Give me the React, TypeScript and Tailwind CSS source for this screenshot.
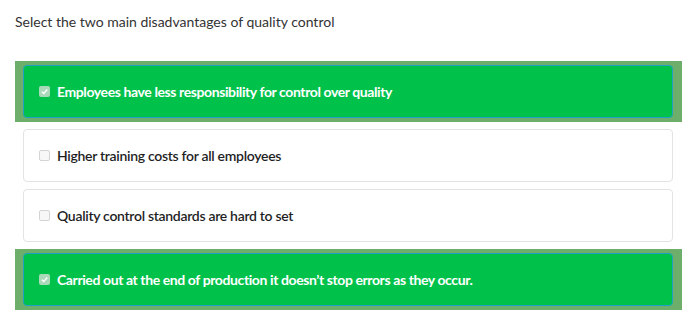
import React from 'react';

type Option = { label: string; selected: boolean };

const options: Option[] = [
  { label: 'Employees have less responsibility for control over quality', selected: true },
  { label: 'Higher training costs for all employees', selected: false },
  { label: 'Quality control standards are hard to set', selected: false },
  { label: 'Carried out at the end of production it doesn\u2019t stop errors as they occur.', selected: true },
];

const CheckBox: React.FC<{ checked: boolean }> = ({ checked }) =>
  checked ? (
    <span className="flex h-[11px] w-[11px] shrink-0 items-center justify-center rounded-[2px] bg-[#a9d9b8]">
      <svg viewBox="0 0 10 10" className="h-[9px] w-[9px]">
        <path d="M2 5.2 L4.2 7.3 L8 2.8" fill="none" stroke="#ffffff" strokeWidth="1.6" />
      </svg>
    </span>
  ) : (
    <span className="h-[11px] w-[11px] shrink-0 rounded-[2px] border border-[#d4d4d4] bg-[#f7f7f7]" />
  );

const OptionRow: React.FC<{ option: Option }> = ({ option }) => {
  if (option.selected) {
    return (
      <div className="bg-[#6daf6a] pl-2 pr-[9px] py-1">
        <div className="flex h-[53px] items-center gap-[7px] rounded-[4px] border border-[#1fa0c4] bg-[#00c24b] pl-[15px]">
          <CheckBox checked />
          <span className="text-[14px] font-bold tracking-[-0.4px] text-white">{option.label}</span>
        </div>
      </div>
    );
  }
  return (
    <div className="ml-2 mr-[9px] flex h-[53px] items-center gap-[7px] rounded-[4px] border border-[#e3e3e3] bg-white pl-[15px]">
      <CheckBox checked={false} />
      <span className="text-[14px] font-semibold tracking-[-0.3px] text-[#1f1f1f]">{option.label}</span>
    </div>
  );
};

export default function App() {
  return (
    <div className="h-[332px] w-[692px] bg-white pl-[15px] pr-[10px] pt-[12px]" style={{ fontFamily: 'Lato, "Noto Sans", sans-serif' }}>
      <p className="text-[14px] leading-[20px] text-[#333333]">Select the two main disadvantages of quality control</p>
      <div className="mt-[29px] flex flex-col gap-[7px]">
        {options.map((o) => (
          <OptionRow key={o.label} option={o} />
        ))}
      </div>
    </div>
  );
}
